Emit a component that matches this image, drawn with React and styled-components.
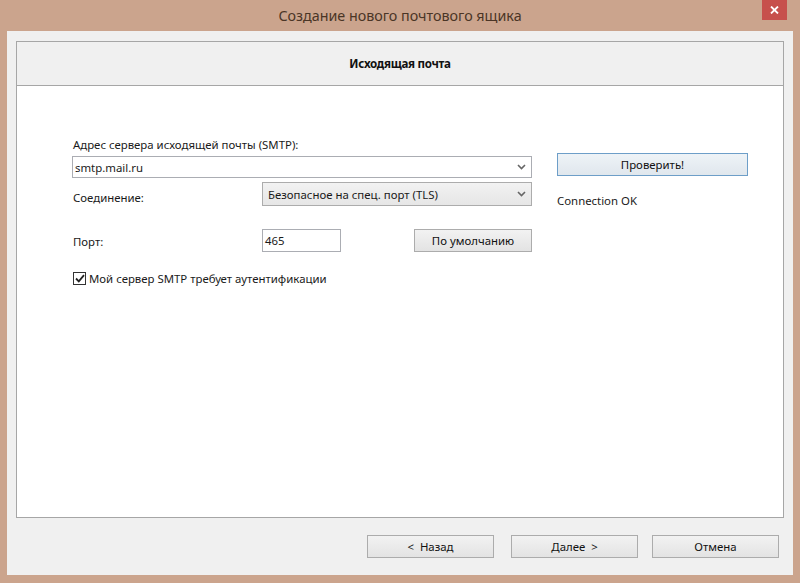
import React from "react";
import styled, { createGlobalStyle } from "styled-components";

const Global = createGlobalStyle`
  html, body { margin: 0; padding: 0; }
  body { background: #c9a08a; font-family: "Noto Sans", "Open Sans", sans-serif; }
  * { box-sizing: border-box; }
`;

const Window = styled.div`
  width: 800px;
  height: 583px;
  background: #cba48d;
  display: flex;
  flex-direction: column;
  overflow: hidden;
`;

const TitleBar = styled.div`
  height: 31px;
  display: grid;
  grid-template-columns: 1fr auto 1fr;
  align-items: start;
`;

const Title = styled.div`
  grid-column: 2;
  padding-top: 6px;
  font-size: 14.3px;
  color: #4a3526;
`;

const CloseButton = styled.div`
  grid-column: 3;
  justify-self: end;
  margin-right: 13px;
  width: 25px;
  height: 20px;
  background: #c7504c;
  display: flex;
  align-items: center;
  justify-content: center;
`;

const Client = styled.div`
  flex: 1;
  margin: 0 7px 8px 7px;
  background: #f0f0f0;
  display: flex;
  flex-direction: column;
  padding: 10px 9px 0 9px;
  font-size: 11.4px;
  color: #1a1a1a;
`;

const Panel = styled.div`
  height: 477px;
  border: 1px solid #a6a6a6;
  background: #ffffff;
  display: flex;
  flex-direction: column;
`;

const PanelHeader = styled.div`
  height: 44px;
  background: #f0f0f0;
  border-bottom: 1px solid #a6a6a6;
  display: flex;
  align-items: center;
  justify-content: center;
  font-weight: bold;
  font-size: 11.6px;
  letter-spacing: -0.3px;
  color: #111;
`;

const Body = styled.div`
  display: flex;
  padding: 51px 0 0 55px;
  gap: 25px;
`;

const LeftCol = styled.div`
  width: 460px;
  display: flex;
  flex-direction: column;
`;

const RightCol = styled.div`
  width: 191px;
  display: flex;
  flex-direction: column;
  padding-top: 16px;
`;

const Label = styled.div`
  line-height: 15px;
  padding-left: 1px;
  white-space: nowrap;
`;

const Combo = styled.div`
  height: ${(p) => p.$h}px;
  margin-top: ${(p) => p.$mt}px;
  border: 1px solid ${(p) => (p.$editable ? "#abadb3" : "#acacac")};
  background: ${(p) => (p.$editable ? "#ffffff" : "linear-gradient(#f2f2f2, #e6e6e6)")};
  display: flex;
  align-items: center;
  padding: 0 5px 0 ${(p) => (p.$editable ? 2 : 5)}px;
`;

const ComboText = styled.span`
  flex: 1;
`;

const FormRow = styled.div`
  display: grid;
  grid-template-columns: 190px 1fr;
  align-items: ${(p) => p.$align || "center"};
  margin-top: ${(p) => p.$mt}px;
`;

const RowLabel = styled.div`
  padding-left: 1px;
  padding-top: ${(p) => p.$pt || 0}px;
`;

const PortLine = styled.div`
  display: flex;
  justify-content: space-between;
  align-items: center;
`;

const Input = styled.div`
  width: 79px;
  height: 23px;
  border: 1px solid #abadb3;
  background: #fff;
  display: flex;
  align-items: center;
  padding-left: 2px;
`;

const Button = styled.div`
  width: ${(p) => p.$w}px;
  height: 23px;
  margin-right: ${(p) => p.$mr || 0}px;
  border: 1px solid ${(p) => (p.$focused ? "#6d9ec8" : "#acacac")};
  background: ${(p) =>
    p.$focused ? "linear-gradient(#eef3f7, #e0e7ed)" : "linear-gradient(#f2f2f2, #e3e3e3)"};
  display: flex;
  align-items: center;
  justify-content: center;
  white-space: pre;
  color: #111;
`;

const CheckRow = styled.label`
  display: flex;
  align-items: center;
  gap: 3px;
  margin-top: 19px;
  padding-left: 1px;
`;

const CheckBox = styled.span`
  width: 13px;
  height: 13px;
  border: 1px solid #333;
  background: #fff;
  display: flex;
  align-items: center;
  justify-content: center;
`;

const Status = styled.div`
  margin-top: 17px;
  line-height: 15px;
`;

const Footer = styled.div`
  flex: 1;
  display: flex;
  justify-content: flex-end;
  align-items: flex-start;
  padding: 17px 5px 0 0;
`;

const Chevron = () => (
  <svg width="9" height="6" viewBox="0 0 9 6">
    <path d="M1 1 L4.5 4.5 L8 1" fill="none" stroke="#666" strokeWidth="1.6" />
  </svg>
);

export default function App() {
  return (
    <>
      <Global />
      <Window>
        <TitleBar>
          <Title>Создание нового почтового ящика</Title>
          <CloseButton>
            <svg width="9" height="8" viewBox="0 0 9 8">
              <path d="M1 0.5 L8 7.5 M8 0.5 L1 7.5" stroke="#fff" strokeWidth="1.8" />
            </svg>
          </CloseButton>
        </TitleBar>
        <Client>
          <Panel>
            <PanelHeader>Исходящая почта</PanelHeader>
            <Body>
              <LeftCol>
                <Label>Адрес сервера исходящей почты (SMTP):</Label>
                <Combo $editable $h={22} $mt={4}>
                  <ComboText>smtp.mail.ru</ComboText>
                  <Chevron />
                </Combo>
                <FormRow $mt={4} $align="start">
                  <RowLabel $pt={8}>Соединение:</RowLabel>
                  <Combo $h={24} $mt={0}>
                    <ComboText>Безопасное на спец. порт (TLS)</ComboText>
                    <Chevron />
                  </Combo>
                </FormRow>
                <FormRow $mt={23}>
                  <RowLabel $pt={2}>Порт:</RowLabel>
                  <PortLine>
                    <Input>465</Input>
                    <Button $w={118}>По умолчанию</Button>
                  </PortLine>
                </FormRow>
                <CheckRow>
                  <CheckBox>
                    <svg width="10" height="9" viewBox="0 0 10 9">
                      <path d="M1 4.5 L3.8 7.3 L9 1.2" fill="none" stroke="#222" strokeWidth="1.8" />
                    </svg>
                  </CheckBox>
                  Мой сервер SMTP требует аутентификации
                </CheckRow>
              </LeftCol>
              <RightCol>
                <Button $w={191} $focused>
                  Проверить!
                </Button>
                <Status>Connection OK</Status>
              </RightCol>
            </Body>
          </Panel>
          <Footer>
            <Button $w={127} $mr={17}>{"<  Назад"}</Button>
            <Button $w={127} $mr={14}>{"Далее  >"}</Button>
            <Button $w={127}>Отмена</Button>
          </Footer>
        </Client>
      </Window>
    </>
  );
}
